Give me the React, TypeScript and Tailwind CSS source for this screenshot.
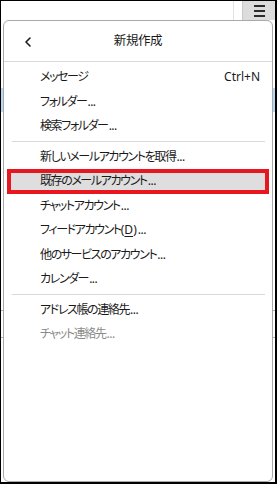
import { ChevronLeft } from "lucide-react";

type Item = {
  label: React.ReactNode;
  dots?: boolean;
  shortcut?: string;
  active?: boolean;
  disabled?: boolean;
};

const groups: Item[][] = [
  [
    { label: "メッセージ", shortcut: "Ctrl+N" },
    { label: "フォルダー", dots: true },
    { label: "検索フォルダー", dots: true },
  ],
  [
    { label: "新しいメールアカウントを取得", dots: true },
    { label: "既存のメールアカウント", dots: true, active: true },
    { label: "チャットアカウント", dots: true },
    {
      label: (
        <>
          フィードアカウント
          <span className="tracking-normal">
            (<span className="underline underline-offset-2">D</span>)
          </span>
        </>
      ),
      dots: true,
    },
    { label: "他のサービスのアカウント", dots: true },
    { label: "カレンダー", dots: true },
  ],
  [
    { label: "アドレス帳の連絡先", dots: true },
    { label: "チャット連絡先", dots: true, disabled: true },
  ],
];

const MenuRow = ({ item }: { item: Item }) => (
  <div
    className={`relative flex h-[24.5px] items-center justify-between pl-[36px] pr-[12px] ${
      item.disabled ? "text-[#8a8a8a]" : "text-[#1a1a1a]"
    }`}
  >
    {item.active && (
      <div className="absolute inset-y-0 left-[3px] right-[3px] border-4 border-[#e8171f] bg-[#dedede]" />
    )}
    <span className="relative">
      <span className="tracking-[-1.4px]">{item.label}</span>
      {item.dots && <span className="ml-[1px] tracking-[-0.5px]">...</span>}
    </span>
    {item.shortcut && <span className="relative">{item.shortcut}</span>}
  </div>
);

const Gutter = () => (
  <div className="flex w-[2px] flex-col bg-white">
    <div className="mt-[68px] h-[24px] bg-[#b9d8f2]" />
    <div className="mt-[198px] h-px bg-[#b4b4b4]" />
    <div className="mt-[26px] h-px bg-[#b4b4b4]" />
  </div>
);

export default function App() {
  return (
    <div className="flex h-[484px] w-[277px] flex-col overflow-hidden border-b-2 border-l border-r-2 border-t border-black bg-white font-['Noto_Sans','Noto_Sans_CJK_JP',sans-serif] text-[12px] [font-feature-settings:'palt']">
      {/* toolbar */}
      <div className="flex h-[19px] shrink-0 justify-end">
        <div className="mr-[8px] w-px bg-[#e2e2e2]" />
        <button className="flex w-[33px] flex-col items-center justify-center gap-[3px] border-l border-[#c9c9c9] bg-[#dcdcdc]">
          <span className="h-[2px] w-[11px] bg-[#2b2b2b]" />
          <span className="h-[2px] w-[11px] bg-[#2b2b2b]" />
          <span className="h-[2px] w-[11px] bg-[#2b2b2b]" />
        </button>
      </div>

      <div className="flex flex-1">
        <Gutter />
        <div className="flex flex-1 flex-col rounded-[6px] border border-[#a9a9a9] bg-white">
          <div className="relative flex h-[41px] shrink-0 items-center justify-center border-b border-[#d9d9d9]">
            <ChevronLeft
              size={16}
              strokeWidth={2.4}
              className="absolute left-[16px] top-[13px] text-[#1a1a1a]"
            />
            <span className="text-[12.5px] tracking-[-0.4px] text-[#1a1a1a]">新規作成</span>
          </div>

          <div className="pt-[3px]">
            {groups.map((group, gi) => (
              <div key={gi}>
                {gi > 0 && <div className="my-[2.5px] ml-[8px] mr-[7px] h-px bg-[#d9d9d9]" />}
                {group.map((item, ii) => (
                  <MenuRow key={ii} item={item} />
                ))}
              </div>
            ))}
          </div>
        </div>
        <Gutter />
      </div>
    </div>
  );
}
